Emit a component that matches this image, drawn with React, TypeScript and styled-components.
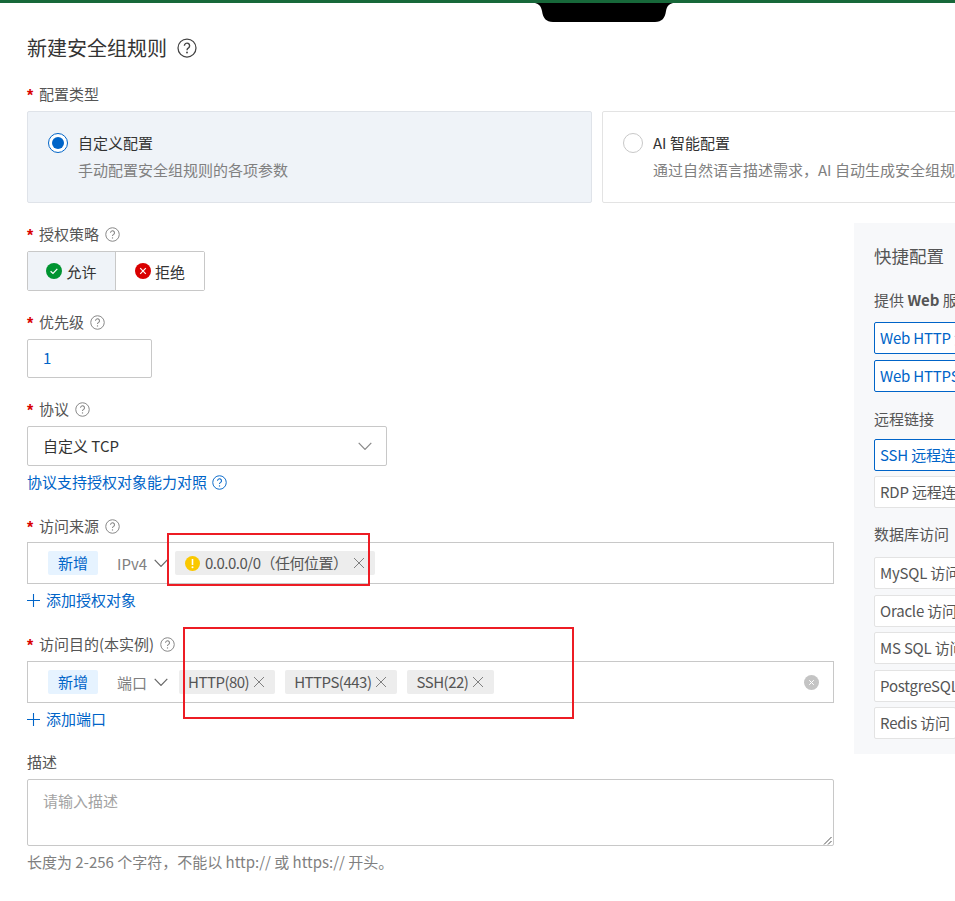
import React from "react"
import styled, { createGlobalStyle } from "styled-components"

const GlobalStyle = createGlobalStyle`
  html, body {
    margin: 0;
    padding: 0;
    background: #fff;
  }
  body {
    font-family: "Noto Sans CJK SC", sans-serif;
    font-size: 15px;
    color: #333;
  }
`

const HelpIcon = ({ size = 15, color = "#808080" }: { size?: number; color?: string }) => (
  <svg width={size} height={size} viewBox="0 0 16 16" fill="none" style={{ flex: "none" }}>
    <circle cx="8" cy="8" r="7.2" stroke={color} strokeWidth="1" />
    <path d="M5.9 6.2a2.1 2.1 0 1 1 3.3 1.7c-.8.5-1.2.9-1.2 1.8" stroke={color} strokeWidth="1.1" fill="none" />
    <circle cx="8" cy="11.6" r=".75" fill={color} />
  </svg>
)

const CloseIcon = () => (
  <svg width="12" height="12" viewBox="0 0 12 12" style={{ flex: "none" }}>
    <path d="M1 1l10 10M11 1L1 11" stroke="#808080" strokeWidth="1" />
  </svg>
)

const Chevron = ({ size = 14, color = "#666" }: { size?: number; color?: string }) => (
  <svg width={size} height={size * 0.6} viewBox="0 0 14 8.4" fill="none" style={{ flex: "none" }}>
    <path d="M.7.8l6.3 6.6L13.3.8" stroke={color} strokeWidth="1.2" />
  </svg>
)

const PlusIcon = () => (
  <svg width="13" height="13" viewBox="0 0 13 13" style={{ flex: "none" }}>
    <path d="M6.5 0v13M0 6.5h13" stroke="#0064c8" strokeWidth="1.1" />
  </svg>
)

const AllowIcon = () => (
  <svg width="16" height="16" viewBox="0 0 16 16" style={{ flex: "none" }}>
    <circle cx="8" cy="8" r="8" fill="#009431" />
    <path d="M4.6 8.2l2.4 2.3 4.3-4.6" stroke="#fff" strokeWidth="1.2" fill="none" />
  </svg>
)

const DenyIcon = () => (
  <svg width="16" height="16" viewBox="0 0 16 16" style={{ flex: "none" }}>
    <circle cx="8" cy="8" r="8" fill="#d90000" />
    <path d="M5.2 5.2l5.6 5.6M10.8 5.2l-5.6 5.6" stroke="#fff" strokeWidth="1.2" />
  </svg>
)

const WarnIcon = () => (
  <svg width="15" height="15" viewBox="0 0 15 15" style={{ flex: "none" }}>
    <circle cx="7.5" cy="7.5" r="7.5" fill="#fac800" />
    <path d="M7.5 3v6" stroke="#fff" strokeWidth="1.6" />
    <circle cx="7.5" cy="11.2" r="1" fill="#fff" />
  </svg>
)

const ClearIcon = () => (
  <svg width="15" height="15" viewBox="0 0 15 15">
    <circle cx="7.5" cy="7.5" r="7.5" fill="#c4c4c4" />
    <path d="M5.2 5.2l4.6 4.6M9.8 5.2l-4.6 4.6" stroke="#fff" strokeWidth="1" />
  </svg>
)

const ResizeGrip = () => (
  <svg width="9" height="9" viewBox="0 0 9 9">
    <path d="M8.5 1L1 8.5M8.5 5L5 8.5" stroke="#555" strokeWidth="1" />
  </svg>
)

const Page = styled.div`
  position: relative;
  width: 955px;
  height: 901px;
  overflow: hidden;
  background: #fff;
`
const TopBar = styled.div`
  height: 3px;
  background: #17683a;
`
const Notch = styled.svg`
  position: absolute;
  left: 535px;
  top: 3px;
`
const Content = styled.div`
  width: 1180px;
  padding: 32px 0 0 27px;
`
const TitleRow = styled.div`
  display: flex;
  align-items: center;
  gap: 10px;
  height: 26px;
  font-size: 20px;
  line-height: 26px;
  color: #333;
`
const Label = styled.div<{ $below?: number }>`
  display: flex;
  align-items: center;
  gap: 6px;
  height: 20px;
  line-height: 20px;
  color: #555;
  margin-bottom: ${p => p.$below ?? 7}px;
`
const Required = styled.span`
  color: #d90000;
  font: bold 16px/20px "Liberation Sans", sans-serif;
  width: 6px;
  transform: translateY(2px);
`
const TypeField = styled.div`
  margin-top: 23px;
`
const TypeCards = styled.div`
  display: flex;
  gap: 10px;
`
const TypeCard = styled.div<{ $active?: boolean }>`
  box-sizing: border-box;
  display: flex;
  gap: 10px;
  width: 565px;
  height: 92px;
  padding: 21px 20px 0;
  border: 1px solid ${p => (p.$active ? "#dfe3e9" : "#e3e3e3")};
  border-radius: 2px;
  background: ${p => (p.$active ? "#eff3f8" : "#fff")};
`
const Radio = styled.span<{ $active?: boolean }>`
  box-sizing: border-box;
  flex: none;
  width: 20px;
  height: 20px;
  border-radius: 50%;
  border: 1px solid ${p => (p.$active ? "#0064c8" : "#c8c8c8")};
  background: #fff;
  display: flex;
  align-items: center;
  justify-content: center;
  &::after {
    content: "";
    width: 12px;
    height: 12px;
    border-radius: 50%;
    background: ${p => (p.$active ? "#0064c8" : "transparent")};
  }
`
const CardTitle = styled.div`
  line-height: 20px;
  color: #333;
`
const CardDesc = styled.div`
  margin-top: 7px;
  line-height: 20px;
  color: #808080;
  white-space: nowrap;
`
const Body = styled.div`
  display: flex;
  gap: 20px;
  margin-top: 20px;
  align-items: flex-start;
`
const FormCol = styled.div`
  width: 807px;
  flex: none;
  padding-top: 1px;
`
const Field = styled.div<{ $after?: number }>`
  margin-bottom: ${p => p.$after ?? 21}px;
`
const SegGroup = styled.div`
  display: flex;
  width: 178px;
  height: 40px;
  box-sizing: border-box;
  border: 1px solid #c8c8c8;
  border-radius: 2px;
`
const Seg = styled.div<{ $active?: boolean }>`
  flex: ${p => (p.$active ? "0 0 87px" : "1")};
  display: flex;
  align-items: center;
  justify-content: center;
  gap: 4px;
  line-height: 19px;
  color: #333;
  background: ${p => (p.$active ? "#eff3f8" : "#fff")};
  & + & {
    border-left: 1px solid #c8c8c8;
  }
`
const NumberBox = styled.div`
  box-sizing: border-box;
  width: 125px;
  height: 39px;
  line-height: 36px;
  padding-left: 15px;
  border: 1px solid #c8c8c8;
  border-radius: 2px;
  color: #0064c8;
`
const SelectBox = styled.div`
  box-sizing: border-box;
  width: 360px;
  height: 40px;
  line-height: 34px;
  display: flex;
  align-items: center;
  justify-content: space-between;
  padding: 0 14px 0 15px;
  border: 1px solid #c8c8c8;
  border-radius: 2px;
  color: #333;
`
const HelpLink = styled.div`
  display: flex;
  align-items: center;
  gap: 5px;
  height: 20px;
  line-height: 20px;
  margin-top: 6px;
  color: #0064c8;
`
const RuleBox = styled.div`
  box-sizing: border-box;
  height: 42px;
  display: flex;
  align-items: center;
  padding-left: 20px;
  border: 1px solid #c8c8c8;
`
const NewBadge = styled.span`
  width: 50px;
  height: 24px;
  line-height: 24px;
  text-align: center;
  flex: none;
  background: #e6f3ff;
  color: #0064c8;
  border-radius: 2px;
`
const TypePick = styled.span`
  display: flex;
  align-items: center;
  gap: 7px;
  margin-left: 19px;
  color: #808080;
  flex: none;
`
const Tag = styled.span<{ $gap?: number }>`
  display: flex;
  align-items: center;
  gap: 4px;
  height: 24px;
  line-height: 24px;
  padding: 0 10px 0 9px;
  margin-left: ${p => p.$gap ?? 10}px;
  background: #ededed;
  border-radius: 2px;
  color: #555;
  letter-spacing: -0.5px;
  white-space: nowrap;
`
const WarnTag = styled(Tag)`
  padding-left: 10px;
  gap: 5px;
`
const ClearSlot = styled.span`
  display: flex;
  margin-left: auto;
  margin-right: 14px;
`
const AddLink = styled.div`
  display: flex;
  align-items: center;
  gap: 6px;
  height: 20px;
  line-height: 20px;
  margin-top: 6px;
  color: #0064c8;
`
const TextArea = styled.div`
  box-sizing: border-box;
  position: relative;
  height: 67px;
  padding: 11px 15px;
  line-height: 20px;
  border: 1px solid #c8c8c8;
  border-radius: 2px;
  color: #a3a3a3;
`
const Grip = styled.span`
  position: absolute;
  right: 1px;
  bottom: 0;
  display: flex;
`
const Hint = styled.div`
  margin-top: 6px;
  line-height: 20px;
  color: #808080;
`
const QuickPanel = styled.div`
  box-sizing: border-box;
  flex: none;
  width: 300px;
  height: 531px;
  padding: 21px 20px 0;
  background: #f7f8fa;
`
const QuickTitle = styled.div`
  font-size: 17.5px;
  line-height: 24px;
  color: #555;
`
const GroupTitle = styled.div<{ $top: number; $below: number }>`
  line-height: 20px;
  color: #555;
  margin-top: ${p => p.$top}px;
  margin-bottom: ${p => p.$below}px;
  b {
    font-weight: 600;
  }
`
const QuickBtn = styled.div<{ $on?: boolean }>`
  box-sizing: border-box;
  width: fit-content;
  height: 32px;
  line-height: 30px;
  padding: 0 5px;
  margin-bottom: 5.5px;
  background: #fff;
  letter-spacing: -0.2px;
  white-space: nowrap;
  border: 1px solid ${p => (p.$on ? "#0064c8" : "#e3e3e3")};
  border-radius: 2px;
  color: ${p => (p.$on ? "#0064c8" : "#555")};
`
const Annotation = styled.div`
  position: absolute;
  box-sizing: border-box;
  border: 2px solid #ed1c24;
  pointer-events: none;
`

const App = () => {
  return (
    <Page>
      <GlobalStyle />
      <TopBar />
      <Notch width="138" height="19" viewBox="0 0 138 19">
        <path d="M0 0H138C134 1 132 3 131 8C130 15 127 19 120 19H18C11 19 8 15 7 8C6 3 4 1 0 0Z" fill="#000" />
      </Notch>
      <Content>
        <TitleRow>
          新建安全组规则
          <HelpIcon size={20} color="#444" />
        </TitleRow>
        <TypeField>
          <Label><Required>*</Required>配置类型</Label>
          <TypeCards>
            <TypeCard $active>
              <Radio $active />
              <div>
                <CardTitle>自定义配置</CardTitle>
                <CardDesc>手动配置安全组规则的各项参数</CardDesc>
              </div>
            </TypeCard>
            <TypeCard>
              <Radio />
              <div>
                <CardTitle>AI 智能配置</CardTitle>
                <CardDesc>{"通过自然语言描述需求\uFF0CAI 自动生成安全组规则"}</CardDesc>
              </div>
            </TypeCard>
          </TypeCards>
        </TypeField>
        <Body>
          <FormCol>
            <Field>
              <Label><Required>*</Required>授权策略<HelpIcon /></Label>
              <SegGroup>
                <Seg $active><AllowIcon />允许</Seg>
                <Seg><DenyIcon />拒绝</Seg>
              </SegGroup>
            </Field>
            <Field>
              <Label><Required>*</Required>优先级<HelpIcon /></Label>
              <NumberBox>1</NumberBox>
            </Field>
            <Field $after={24}>
              <Label><Required>*</Required>协议<HelpIcon /></Label>
              <SelectBox>自定义 TCP<Chevron color="#888" /></SelectBox>
              <HelpLink>协议支持授权对象能力对照<HelpIcon color="#0064c8" /></HelpLink>
            </Field>
            <Field $after={24}>
              <Label $below={6}><Required>*</Required>访问来源<HelpIcon /></Label>
              <RuleBox>
                <NewBadge>新增</NewBadge>
                <TypePick>IPv4<Chevron /></TypePick>
                <WarnTag $gap={7}><WarnIcon />{"0.0.0.0/0\uFF08任何位置\uFF09"}<CloseIcon /></WarnTag>
              </RuleBox>
              <AddLink><PlusIcon />添加授权对象</AddLink>
            </Field>
            <Field $after={23}>
              <Label><Required>*</Required>访问目的(本实例)<HelpIcon /></Label>
              <RuleBox>
                <NewBadge>新增</NewBadge>
                <TypePick>端口<Chevron /></TypePick>
                <Tag $gap={11}>HTTP(80)<CloseIcon /></Tag>
                <Tag>HTTPS(443)<CloseIcon /></Tag>
                <Tag>SSH(22)<CloseIcon /></Tag>
                <ClearSlot><ClearIcon /></ClearSlot>
              </RuleBox>
              <AddLink><PlusIcon />添加端口</AddLink>
            </Field>
            <div>
              <Label>描述</Label>
              <TextArea>
                请输入描述
                <Grip><ResizeGrip /></Grip>
              </TextArea>
              <Hint>{"长度为 2-256 个字符\uFF0C不能以 http:// 或 https:// 开头。"}</Hint>
            </div>
          </FormCol>
          <QuickPanel>
            <QuickTitle>快捷配置</QuickTitle>
            <GroupTitle $top={22} $below={12}>提供 <b>Web</b> 服务</GroupTitle>
            <QuickBtn $on>Web HTTP 流量访问</QuickBtn>
            <QuickBtn $on>Web HTTPS 流量访问</QuickBtn>
            <GroupTitle $top={17} $below={10}>远程链接</GroupTitle>
            <QuickBtn $on>SSH 远程连接</QuickBtn>
            <QuickBtn>RDP 远程连接</QuickBtn>
            <GroupTitle $top={16} $below={13}>数据库访问</GroupTitle>
            <QuickBtn>MySQL 访问</QuickBtn>
            <QuickBtn>Oracle 访问</QuickBtn>
            <QuickBtn>MS SQL 访问</QuickBtn>
            <QuickBtn>PostgreSQL 访问</QuickBtn>
            <QuickBtn>Redis 访问</QuickBtn>
          </QuickPanel>
        </Body>
      </Content>
      <Annotation style={{ left: 167, top: 533, width: 203, height: 53 }} />
      <Annotation style={{ left: 183, top: 627, width: 391, height: 92 }} />
    </Page>
  )
}

export default App
